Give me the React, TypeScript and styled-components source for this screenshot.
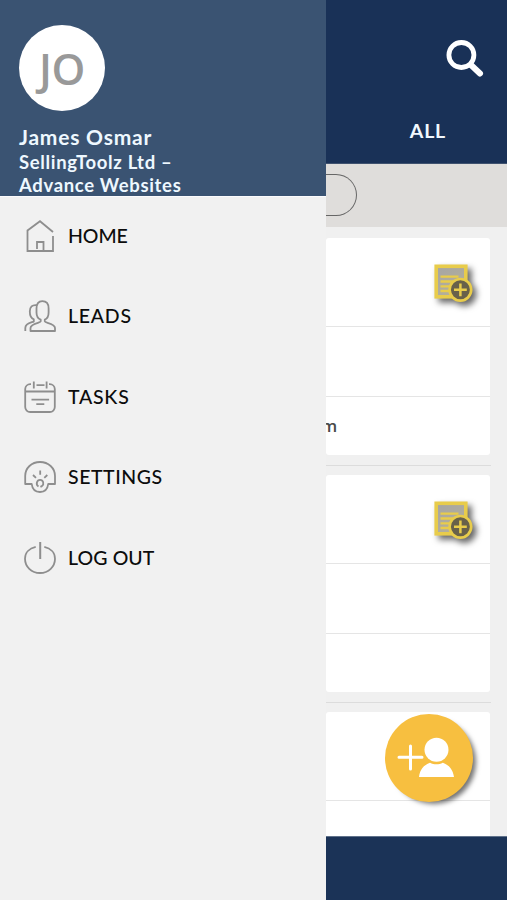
import React from "react";
import styled, { createGlobalStyle } from "styled-components";

const GlobalStyle = createGlobalStyle`
  * { box-sizing: border-box; }
  body { margin: 0; background: #f1f1f1; font-family: Lato, "Open Sans", sans-serif; }
`;

const Screen = styled.div`
  display: grid;
  grid-template-columns: 326px minmax(0, 1fr);
  height: 900px;
  overflow: hidden;
`;

const Drawer = styled.aside`
  background: #f1f1f1;
  height: 900px;
`;

const Profile = styled.header`
  height: 197px;
  padding: 25px 19px 0;
  background: #3a5372;
  border-bottom: 1px solid #fbfbfd;
  color: #eef8ff;
`;

const Avatar = styled.div`
  display: flex;
  align-items: center;
  justify-content: center;
  width: 86px;
  height: 86px;
  border-radius: 50%;
  background: #fff;
  color: #999;
  font: 600 43px/1 "Open Sans", sans-serif;
  letter-spacing: -0.4px;
`;

const Name = styled.div`
  margin-top: 13px;
  font-size: 21px;
  font-weight: 700;
  line-height: 26px;
  letter-spacing: 0.78px;
  white-space: nowrap;
`;

const Company = styled.div`
  font-size: 18.5px;
  font-weight: 700;
  line-height: 23px;
  letter-spacing: 0.66px;
  padding-top: 1px;
  white-space: nowrap;
`;

const Nav = styled.nav`
  display: flex;
  flex-direction: column;
`;

const NavItem = styled.a`
  display: flex;
  align-items: center;
  gap: 12px;
  height: 80.75px;
  padding: 0 24px;
  color: #0c0c0c;
  text-decoration: none;
  &:first-child { height: 78px; }
  &:nth-child(2) { height: 82px; }
  &:nth-child(3) { height: 80px; }
`;

const NavLabel = styled.span<{ $spacing: number }>`
  font-size: 19.5px;
  font-weight: 500;
  line-height: 24px;
  letter-spacing: ${(p) => p.$spacing}px;
  white-space: nowrap;
`;

const NavIcon = styled.svg`
  width: 32px;
  height: 32px;
  flex: none;
  fill: none;
  stroke: #8e8e8e;
  stroke-width: 1.8;
  stroke-linejoin: round;
`;

const Content = styled.main`
  display: flex;
  flex-direction: column;
  height: 900px;
  min-width: 0;
  background: #f0f0f0;
`;

const TopBar = styled.header`
  display: flex;
  flex-direction: column;
  align-items: flex-end;
  height: 164px;
  flex: none;
  padding: 40px 23px 0 0;
  background: #193157;
  border-bottom: 1px solid #3f526f;
`;

const SearchIcon = styled.svg`
  width: 38px;
  height: 38px;
  fill: none;
  stroke: #fff;
`;

const Tab = styled.span`
  margin: 41px 38px 0 0;
  color: #f1f8ff;
  font-size: 19.5px;
  font-weight: 700;
  line-height: 24px;
  letter-spacing: 0.8px;
`;

const FilterBar = styled.div`
  height: 63px;
  flex: none;
  padding-top: 10px;
  background: #dfdddb;
`;

const Pill = styled.div`
  width: 31px;
  height: 42px;
  border: 1.4px solid #666;
  border-left: 0;
  border-radius: 0 21px 21px 0;
`;

const List = styled.section`
  flex: 1;
  min-height: 0;
  overflow: hidden;
  padding-top: 11px;
`;

const Card = styled.article`
  width: 164px;
  height: 217px;
  background: #fff;
  border-radius: 3px;
`;

const Separator = styled.hr`
  width: 165px;
  height: 1px;
  margin: 10px 0 9px;
  border: 0;
  background: #dcdcdc;
`;

const CardRow = styled.div<{ $height: number }>`
  display: flex;
  align-items: center;
  justify-content: space-between;
  height: ${(p) => p.$height}px;
  overflow: hidden;
  color: #494949;
  font: 600 17px/24px "Open Sans", sans-serif;
  & + & { border-top: 1px solid #e5e5e5; }
`;

const Contact = styled.span`
  margin-left: -5px;
`;

const NoteSvg = styled.svg`
  width: 40px;
  height: 40px;
  margin: 4px 17px 0 auto;
  overflow: visible;
  fill: none;
  stroke: #e8cc4b;
  filter: drop-shadow(4px 4px 3px rgba(0, 0, 0, 0.6));
`;

const Footer = styled.footer`
  height: 64px;
  flex: none;
  background: #1b3357;
  border-top: 1px solid #60728b;
`;

const AddButton = styled.button`
  position: absolute;
  left: 385px;
  top: 714px;
  width: 88px;
  height: 88px;
  padding: 0;
  border: 0;
  border-radius: 50%;
  background: #f7bf40;
  box-shadow: 5px 4px 5px -2px rgba(0, 0, 0, 0.55);
`;

const HomeIcon = () => (
  <NavIcon viewBox="0 0 32 32">
    <path d="M29 12 16 1.2 3.5 10.5V31H29V16M13 29V22h6.5v9" strokeLinejoin="miter" />
  </NavIcon>
);

const LeadsIcon = () => (
  <NavIcon viewBox="0 0 32 32">
    <path d="M18.3 1.2C14.3 1.2 12.5 4 12.5 8.5v4c0 3.5 1.7 6.2 4.2 7.2v1.8c0 1.3-10.2 1.8-10.2 6.5v3H31v-3c0-4.7-10.2-5.2-10.2-6.5v-1.8c2.4-1 3.8-3.7 3.8-7.2v-4c0-4.5-2.3-7.3-6.3-7.3Z" />
    <path d="M13.2 5.2C8 4.3 5.8 7.2 5.8 11.5c0 4.5 1.2 6.8 4 7.8v2.2c-1.2 1-8.5 1.2-8.5 6.5v3" />
  </NavIcon>
);

const TasksIcon = () => (
  <NavIcon viewBox="0 0 32 32">
    <path d="M7 3.2H6.2A5 5 0 0 0 1.2 8v18a5 5 0 0 0 5 5h19.6a5 5 0 0 0 5-5V8a5 5 0 0 0-5-4.8H25M12.5 4.2h8M1.2 10.5h29.6" />
    <path d="M9.8.5v7M22.6.5v7M7.5 18.6h17.6M12.3 23.2h8" />
  </NavIcon>
);

const SettingsIcon = () => (
  <NavIcon viewBox="0 0 32 32">
    <path d="M1.2 23V15C1.2 7 7.6 1 16 1s15 6 15 14v8h-6.8c-.6 5-3.6 8-8.2 8s-7.7-3-8.3-8Z" />
    <path d="M16.2 9.5v4.3M9 14l3 2.8M23.3 14l-3 2.8" />
    <path d="M14.5 25.6c-3-1.8-1.8-6.8 1.6-6.8 3.2 0 4.4 4.2 1.8 6.3l-1.5.8" />
  </NavIcon>
);

const PowerIcon = () => (
  <NavIcon viewBox="0 0 32 32">
    <path d="M11.7 4.8C5.4 6.2 1 10.6 1 16.7 1 24.6 7.4 31 16 31s15-6.4 15-14.3c0-6.1-4.4-10.5-10.7-11.9" />
    <path d="M16.2 0v17" strokeWidth="2" />
  </NavIcon>
);

const NoteIcon = () => (
  <NoteSvg viewBox="0 0 40 40">
    <defs>
      <linearGradient id="noteFill" x1="0" y1="0" x2="0.5" y2="1">
        <stop offset="0" stopColor="#a5a5a5" />
        <stop offset="1" stopColor="#b5b09a" />
      </linearGradient>
    </defs>
    <rect x="3.2" y="2.3" width="29.6" height="30.5" fill="url(#noteFill)" strokeWidth="3.6" />
    <path d="M7.5 12.6h18M7.5 17.5h14M7.5 22.4h10M7.5 27h9" strokeWidth="2.4" />
    <circle cx="27.4" cy="25.8" r="10.8" fill="#68614a" strokeWidth="2.7" />
    <path d="M21 25.8h12.8M27.4 19.4v12.8" strokeWidth="2.5" />
  </NoteSvg>
);

const navItems = [
  { label: "HOME", Icon: HomeIcon, spacing: -0.1 },
  { label: "LEADS", Icon: LeadsIcon, spacing: 0.75 },
  { label: "TASKS", Icon: TasksIcon, spacing: 0.75 },
  { label: "SETTINGS", Icon: SettingsIcon, spacing: 0.55 },
  { label: "LOG OUT", Icon: PowerIcon, spacing: 0.1 },
];

const LeadCard = ({ contact, note = true }: { contact?: string; note?: boolean }) => (
  <Card>
    <CardRow $height={88}>{note && <NoteIcon />}</CardRow>
    <CardRow $height={70} />
    <CardRow $height={59}>{contact && <Contact>{contact}</Contact>}</CardRow>
  </Card>
);

export default function App() {
  return (
    <>
      <GlobalStyle />
      <Screen>
        <Drawer>
          <Profile>
            <Avatar>JO</Avatar>
            <Name>James Osmar</Name>
            <Company>SellingToolz Ltd –<br />Advance Websites</Company>
          </Profile>
          <Nav>
            {navItems.map(({ label, Icon, spacing }) => (
              <NavItem key={label}>
                <Icon />
                <NavLabel $spacing={spacing}>{label}</NavLabel>
              </NavItem>
            ))}
          </Nav>
        </Drawer>
        <Content>
          <TopBar>
            <SearchIcon viewBox="0 0 38 38">
              <circle cx="15.4" cy="15" r="12.5" strokeWidth="4.8" />
              <path d="m25 25 9 8.5" strokeWidth="6" strokeLinecap="round" />
            </SearchIcon>
            <Tab>ALL</Tab>
          </TopBar>
          <FilterBar><Pill /></FilterBar>
          <List>
            <LeadCard contact="m" />
            <Separator />
            <LeadCard />
            <Separator />
            <LeadCard note={false} />
          </List>
          <Footer />
        </Content>
      </Screen>
      <AddButton aria-label="Add lead">
        <svg width="88" height="88" viewBox="0 0 88 88" fill="#fff">
          <path d="M14 43.2h23M25.5 32v23" stroke="#fff" strokeWidth="3" strokeLinecap="round" />
          <circle cx="51.5" cy="35.7" r="12" />
          <path d="M34 63c.8-7 4.6-12 11-14.2 4 2 8.8 2 12.8 0C64.2 51 68 56 69 63Z" />
        </svg>
      </AddButton>
    </>
  );
}
